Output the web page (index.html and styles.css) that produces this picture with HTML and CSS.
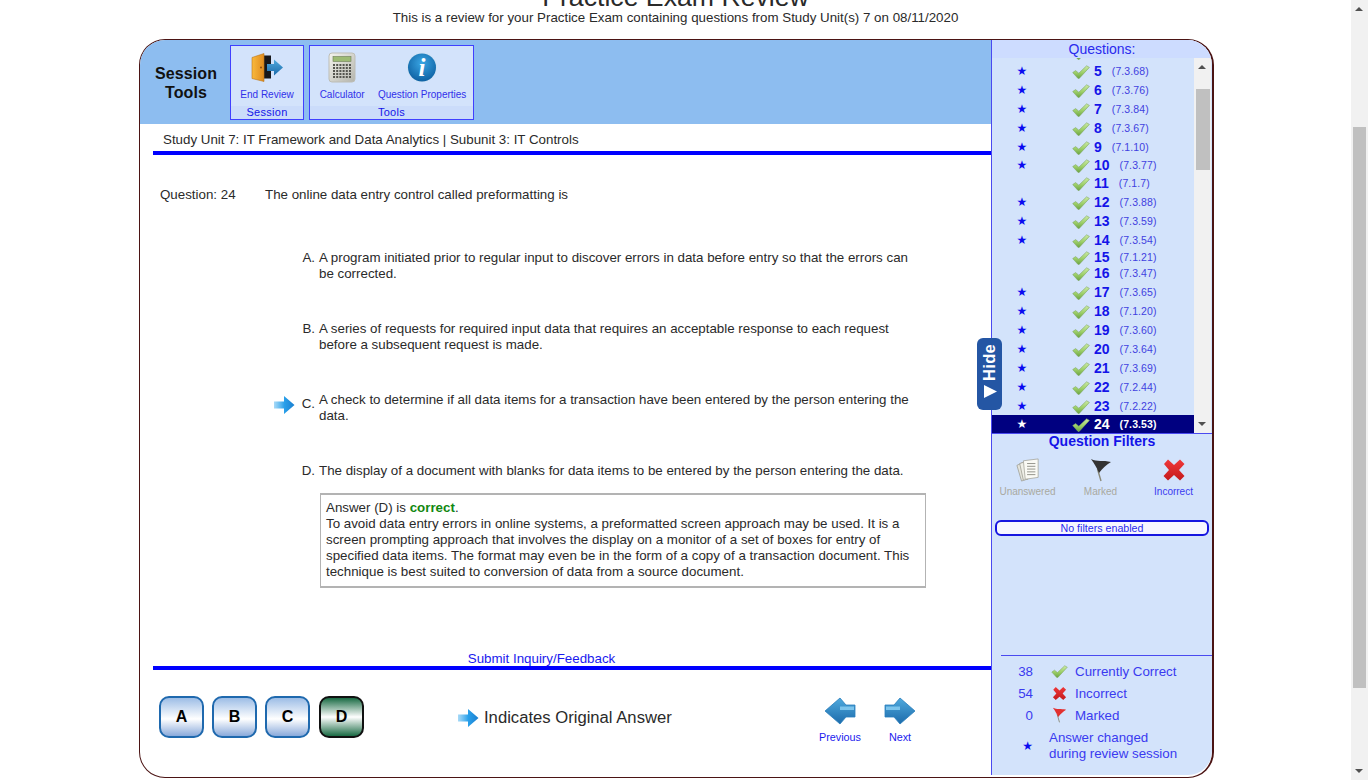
FILE: index.html
```html
<!DOCTYPE html>
<html lang="en">
<head>
    <meta charset="UTF-8">
    <title>Practice Exam Review</title>
    <link rel="stylesheet" href="styles.css">
</head>
<body>

<!-- icon sheet -->
<svg class="sprites" width="0" height="0">
    <defs>
        <linearGradient id="gCheck" x1="0" y1="0" x2="0" y2="1">
            <stop offset="0" stop-color="#cdeaa6"/><stop offset="0.55" stop-color="#9ccf68"/><stop offset="1" stop-color="#6ca443"/>
        </linearGradient>
        <linearGradient id="gArrow" x1="0" y1="0" x2="1" y2="0">
            <stop offset="0" stop-color="#6cc0f2" stop-opacity="0.6"/><stop offset="0.5" stop-color="#29a0ea"/><stop offset="1" stop-color="#1a7fd0"/>
        </linearGradient>
        <linearGradient id="gNav" x1="0" y1="0" x2="0" y2="1">
            <stop offset="0" stop-color="#4fa9dd"/><stop offset="1" stop-color="#1c6bab"/>
        </linearGradient>
        <linearGradient id="gDoor" x1="0" y1="0" x2="1" y2="0">
            <stop offset="0" stop-color="#f9b93c"/><stop offset="1" stop-color="#e08b1e"/>
        </linearGradient>
        <linearGradient id="gCalc" x1="0" y1="0" x2="1" y2="1">
            <stop offset="0" stop-color="#f4f4ee"/><stop offset="1" stop-color="#b4b4ac"/>
        </linearGradient>
        <radialGradient id="gInfo" cx="0.5" cy="0.35" r="0.7">
            <stop offset="0" stop-color="#3aa6e4"/><stop offset="1" stop-color="#0b5c9e"/>
        </radialGradient>
        <linearGradient id="gCross" x1="0" y1="0" x2="0" y2="1">
            <stop offset="0" stop-color="#f0383a"/><stop offset="1" stop-color="#c41a1c"/>
        </linearGradient>

        <symbol id="iCheck" viewBox="0 0 18 14">
            <path d="M0.7 7.6 L3.6 5.6 L6.8 8.2 L14.6 0.8 L17.4 2.4 L7.2 13.4 L6 13.4 Z" fill="url(#gCheck)" stroke="#7fa866" stroke-width="0.6"/>
        </symbol>
        <symbol id="iCross" viewBox="0 0 24 24">
            <path d="M2 6 L6 1.5 L12 7 L18 1.5 L22.5 6 L17 12 L22.5 18 L18 22.5 L12 17 L6 22.5 L1.5 18 L7 12 Z" fill="url(#gCross)"/>
        </symbol>
        <symbol id="iFlag" viewBox="0 0 22 24">
            <path d="M7.5 11 L11 23" stroke="#8a8a7a" stroke-width="1.4" fill="none"/>
            <path d="M1 1 C7 4 13 2 21 4 C16 7 13 10 9 15 C7 10 4 5 1 1 Z" fill="currentColor"/>
        </symbol>
        <symbol id="iArrowRight" viewBox="0 0 22 20">
            <path d="M1 6.5 H11 V1 L21.5 10 L11 19 V13.5 H1 Z" fill="url(#gArrow)"/>
        </symbol>
        <symbol id="iNext" viewBox="0 0 32 28">
            <path d="M1 8 H10 L16 1 L31 14 L16 27 L10 20 H1 Z" fill="url(#gNav)" stroke="#2a7fbd" stroke-width="0.8" stroke-linejoin="round"/>
            <path d="M2 9.5 H16 V13 H2 Z" fill="#7cc4ec"/>
        </symbol>
        <symbol id="iPrev" viewBox="0 0 32 28">
            <path d="M31 8 H22 L16 1 L1 14 L16 27 L22 20 H31 Z" fill="url(#gNav)" stroke="#2a7fbd" stroke-width="0.8" stroke-linejoin="round"/>
            <path d="M30 9.5 H16 V13 H30 Z" fill="#7cc4ec"/>
        </symbol>
    </defs>
</svg>

<div class="page">
    <div class="viewport">
        <header class="head">
            <h1 class="title">Practice Exam Review</h1>
            <p class="subtitle">This is a review for your Practice Exam containing questions from Study Unit(s) 7 on 08/11/2020</p>
        </header>

        <div class="frame">
            <main class="left">
                <div class="topbar">
                    <div class="brand">Session<br>Tools</div>
                    <div class="toolgroup group-session">
                        <div class="tools">
                            <a class="tool tool-door">
                                <svg class="tool-icon" width="34" height="30" viewBox="0 0 34 30">
                                    <path d="M8 3 H20 V26 H8 Z" fill="#17171a"/>
                                    <path d="M1 5 L13 1 V29 L1 26 Z" fill="url(#gDoor)" stroke="#b9761c" stroke-width="0.6"/>
                                    <circle cx="10" cy="15" r="1" fill="#8a4a10"/>
                                    <path d="M16 11.5 H23 V7 L32 15 L23 23 V18.5 H16 Z" fill="url(#gNav)"/>
                                </svg>
                                <span>End Review</span>
                            </a>
                        </div>
                        <div class="group-label">Session</div>
                    </div>
                    <div class="toolgroup group-tools">
                        <div class="tools">
                            <a class="tool tool-calc">
                                <svg class="tool-icon" width="28" height="31" viewBox="0 0 28 31">
                                    <rect x="1" y="1" width="26" height="29" rx="3" fill="url(#gCalc)" stroke="#bdbdb5"/>
                                    <rect x="5" y="4.5" width="18" height="5" fill="#9dbb74" stroke="#6d7d55" stroke-width="0.6"/>
                                    <path d="M5 13 H23 M5 16 H23 M5 19 H23 M5 22 H23 M5 25 H23" stroke="#55554f" stroke-width="2" stroke-dasharray="2 1.2"/>
                                </svg>
                                <span>Calculator</span>
                            </a>
                            <a class="tool tool-info">
                                <svg class="tool-icon" width="32" height="31" viewBox="0 0 32 31">
                                    <circle cx="16" cy="15.5" r="15" fill="#cfe2f4"/>
                                    <circle cx="16" cy="15.5" r="14" fill="url(#gInfo)"/>
                                    <text class="info-i" x="16" y="24" text-anchor="middle">i</text>
                                </svg>
                                <span>Question Properties</span>
                            </a>
                        </div>
                        <div class="group-label">Tools</div>
                    </div>
                </div>

                <div class="subject">Study Unit 7: IT Framework and Data Analytics | Subunit 3: IT Controls</div>

                <section class="body">
                    <div class="question">
                        <div class="q-num">Question: 24</div>
                        <div class="q-text">The online data entry control called preformatting is</div>
                    </div>

                    <div class="answer">
                        <div class="slot"></div>
                        <div class="letter">A.</div>
                        <div class="a-text">A program initiated prior to regular input to discover errors in data before entry so that the errors can be corrected.</div>
                    </div>
                    <div class="answer">
                        <div class="slot"></div>
                        <div class="letter">B.</div>
                        <div class="a-text">A series of requests for required input data that requires an acceptable response to each request before a subsequent request is made.</div>
                    </div>
                    <div class="answer answer-original">
                        <div class="slot"><svg width="22" height="20"><use href="#iArrowRight"/></svg></div>
                        <div class="letter">C.</div>
                        <div class="a-text">A check to determine if all data items for a transaction have been entered by the person entering the data.</div>
                    </div>
                    <div class="answer answer-last">
                        <div class="slot"></div>
                        <div class="letter">D.</div>
                        <div class="a-text">The display of a document with blanks for data items to be entered by the person entering the data.</div>
                    </div>

                    <div class="explain">
                        Answer (D) is <b class="correct">correct</b>.<br>
                        To avoid data entry errors in online systems, a preformatted screen approach may be used. It is a screen prompting approach that involves the display on a monitor of a set of boxes for entry of specified data items. The format may even be in the form of a copy of a transaction document. This technique is best suited to conversion of data from a source document.
                    </div>
                </section>

                <div class="inquiry"><a>Submit Inquiry/Feedback</a></div>

                <footer class="foot">
                    <div class="choices">
                        <button class="choice">A</button>
                        <button class="choice">B</button>
                        <button class="choice">C</button>
                        <button class="choice choice-right">D</button>
                    </div>
                    <div class="original">
                        <svg width="22" height="20"><use href="#iArrowRight"/></svg>
                        <span>Indicates Original Answer</span>
                    </div>
                    <a class="nav nav-prev"><svg width="34" height="28"><use href="#iPrev"/></svg><span>Previous</span></a>
                    <a class="nav nav-next"><svg width="32" height="28"><use href="#iNext"/></svg><span>Next</span></a>
                </footer>
            </main>

            <aside class="panel">
                <div class="panel-title">Questions:</div>
                <div class="listwrap">
                    <div class="list">
                        <div class="rows">
                            <!-- row above is scrolled away, only its check shows -->
                            <div class="row h19"><span class="star"></span><svg class="chk" width="18" height="14"><use href="#iCheck"/></svg></div>
                            <div class="row h19"><span class="star">★</span><svg class="chk" width="18" height="14"><use href="#iCheck"/></svg><b class="num">5</b><span class="code">(7.3.68)</span></div>
                            <div class="row h19"><span class="star">★</span><svg class="chk" width="18" height="14"><use href="#iCheck"/></svg><b class="num">6</b><span class="code">(7.3.76)</span></div>
                            <div class="row h19"><span class="star">★</span><svg class="chk" width="18" height="14"><use href="#iCheck"/></svg><b class="num">7</b><span class="code">(7.3.84)</span></div>
                            <div class="row h19"><span class="star">★</span><svg class="chk" width="18" height="14"><use href="#iCheck"/></svg><b class="num">8</b><span class="code">(7.3.67)</span></div>
                            <div class="row h19"><span class="star">★</span><svg class="chk" width="18" height="14"><use href="#iCheck"/></svg><b class="num">9</b><span class="code">(7.1.10)</span></div>
                            <div class="row h18"><span class="star">★</span><svg class="chk" width="18" height="14"><use href="#iCheck"/></svg><b class="num">10</b><span class="code">(7.3.77)</span></div>
                            <div class="row h18"><span class="star"></span><svg class="chk" width="18" height="14"><use href="#iCheck"/></svg><b class="num">11</b><span class="code">(7.1.7)</span></div>
                            <div class="row h19"><span class="star">★</span><svg class="chk" width="18" height="14"><use href="#iCheck"/></svg><b class="num">12</b><span class="code">(7.3.88)</span></div>
                            <div class="row h19"><span class="star">★</span><svg class="chk" width="18" height="14"><use href="#iCheck"/></svg><b class="num">13</b><span class="code">(7.3.59)</span></div>
                            <div class="row h19"><span class="star">★</span><svg class="chk" width="18" height="14"><use href="#iCheck"/></svg><b class="num">14</b><span class="code">(7.3.54)</span></div>
                            <div class="row h15"><span class="star"></span><svg class="chk" width="18" height="14"><use href="#iCheck"/></svg><b class="num">15</b><span class="code">(7.1.21)</span></div>
                            <div class="row h18"><span class="star"></span><svg class="chk" width="18" height="14"><use href="#iCheck"/></svg><b class="num">16</b><span class="code">(7.3.47)</span></div>
                            <div class="row h19"><span class="star">★</span><svg class="chk" width="18" height="14"><use href="#iCheck"/></svg><b class="num">17</b><span class="code">(7.3.65)</span></div>
                            <div class="row h19"><span class="star">★</span><svg class="chk" width="18" height="14"><use href="#iCheck"/></svg><b class="num">18</b><span class="code">(7.1.20)</span></div>
                            <div class="row h19"><span class="star">★</span><svg class="chk" width="18" height="14"><use href="#iCheck"/></svg><b class="num">19</b><span class="code">(7.3.60)</span></div>
                            <div class="row h19"><span class="star">★</span><svg class="chk" width="18" height="14"><use href="#iCheck"/></svg><b class="num">20</b><span class="code">(7.3.64)</span></div>
                            <div class="row h19"><span class="star">★</span><svg class="chk" width="18" height="14"><use href="#iCheck"/></svg><b class="num">21</b><span class="code">(7.3.69)</span></div>
                            <div class="row h19"><span class="star">★</span><svg class="chk" width="18" height="14"><use href="#iCheck"/></svg><b class="num">22</b><span class="code">(7.2.44)</span></div>
                            <div class="row h19"><span class="star">★</span><svg class="chk" width="18" height="14"><use href="#iCheck"/></svg><b class="num">23</b><span class="code">(7.2.22)</span></div>
                            <div class="row h18 row-current"><span class="star">★</span><svg class="chk" width="18" height="14"><use href="#iCheck"/></svg><b class="num">24</b><span class="code">(7.3.53)</span></div>
                        </div>
                    </div>
                    <div class="scroll scroll-list">
                        <span class="tri tri-up"></span>
                        <span class="thumb"></span>
                        <span class="tri tri-down"></span>
                    </div>
                </div>

                <div class="filters">
                    <div class="filters-title">Question Filters</div>
                    <div class="filter-items">
                        <div class="filter filter-off">
                            <svg width="26" height="26" viewBox="0 0 26 26">
                                <path d="M1 8 L7 5 L11 23 L6 25 Z" fill="#e4e4dc" stroke="#99998f" stroke-width="0.8"/>
                                <path d="M4 6 L10 4 L13 23 L8 24 Z" fill="#efefe8" stroke="#99998f" stroke-width="0.8"/>
                                <path d="M8 3 L24 1 L24 21 L10 23 Z" fill="#fafaf5" stroke="#a0a096" stroke-width="0.8"/>
                                <path d="M12 6 H21 M12 9 H21 M12 12 H21 M12 15 H21 M12 18 H21" stroke="#8e8e86" stroke-width="1"/>
                            </svg>
                            <span>Unanswered</span>
                        </div>
                        <div class="filter filter-off">
                            <svg class="flag-black" width="22" height="24"><use href="#iFlag"/></svg>
                            <span>Marked</span>
                        </div>
                        <div class="filter">
                            <svg width="24" height="24"><use href="#iCross"/></svg>
                            <span>Incorrect</span>
                        </div>
                    </div>
                    <div class="filter-status">No filters enabled</div>
                </div>

                <div class="legend">
                    <div class="legend-row"><span class="count">38</span><svg class="legend-icon" width="17" height="13"><use href="#iCheck"/></svg><span>Currently Correct</span></div>
                    <div class="legend-row"><span class="count">54</span><svg class="legend-icon" width="15" height="15"><use href="#iCross"/></svg><span>Incorrect</span></div>
                    <div class="legend-row"><span class="count">0</span><svg class="legend-icon flag-red" width="15" height="16"><use href="#iFlag"/></svg><span>Marked</span></div>
                    <div class="legend-change"><span class="star">★</span><span>Answer changed<br>during review session</span></div>
                </div>
            </aside>

            <div class="hide-tab">
                <span class="hide-text">Hide</span>
                <svg width="16" height="15" viewBox="0 0 16 15"><path d="M2 1 L15 7.5 L2 14 Z" fill="#fff"/></svg>
            </div>
        </div>
    </div>

    <div class="scroll scroll-page">
        <span class="tri tri-up"></span>
        <span class="thumb"></span>
        <span class="tri tri-down"></span>
    </div>
</div>

</body>
</html>
```

FILE: styles.css
```css
html, body {
    margin: 0;
    padding: 0;
    height: 780px;
    overflow: hidden;
    background: #fff;
    font-family: "Liberation Sans", Arial, sans-serif;
    color: #2a2a2a;
}

.sprites {
    position: absolute;
}

.page {
    display: flex;
    height: 780px;
}

.viewport {
    flex: 1;
    overflow: hidden;
}

/* page heading, scrolled partly out of view */
.head {
    display: flow-root;
    height: 39px;
    text-align: center;
}

.title {
    margin: -17px 0 0;
    font-size: 26.67px;
    line-height: 28px;
    font-weight: normal;
}

.subtitle {
    margin: -1px 0 0;
    font-size: 13.33px;
    line-height: 16px;
}

.frame {
    position: relative;
    display: grid;
    grid-template-columns: 1fr 221px;
    width: 1072px;
    height: 737px;
    margin-left: 139px;
    border: 1px solid #4b1414;
    border-right-width: 2px;
    border-radius: 26px;
    overflow: hidden;
    box-sizing: content-box;
}

.left {
    display: flex;
    flex-direction: column;
    min-width: 0;
}

/* top toolbar */
.topbar {
    display: flex;
    height: 84px;
    padding: 5px 0 4px;
    box-sizing: border-box;
    background: #8dbdf0;
}

.brand {
    width: 88px;
    padding: 19px 0 0 2px;
    font-size: 16px;
    line-height: 19px;
    font-weight: bold;
    letter-spacing: 0.1px;
    text-align: center;
    color: #111;
}

.toolgroup {
    display: flex;
    flex-direction: column;
    box-sizing: border-box;
    margin-right: 5px;
    border: 1px solid #4040ff;
    background: #d3e3fb;
}

.group-session {
    width: 74px;
}

.group-tools {
    width: 165px;
}

.group-tools .tools {
    padding-left: 3px;
}

.tools {
    display: flex;
    flex: 1;
    justify-content: space-around;
}

.tool {
    display: flex;
    flex-direction: column;
    align-items: center;
    padding-top: 6px;
    font-size: 10px;
    color: #3030ea;
    white-space: nowrap;
}

.tool-icon {
    height: 31px;
    margin-bottom: 6px;
}

.tool-door .tool-icon {
    margin-left: 3px;
}

.info-i {
    font-family: "Liberation Serif", serif;
    font-size: 25px;
    font-weight: bold;
    font-style: italic;
    fill: #fff;
}

.group-label {
    height: 13px;
    font-size: 11px;
    line-height: 13px;
    text-align: center;
    letter-spacing: 0.3px;
    color: #1515e8;
    background: #cbdcfa;
}

/* subject line */
.subject {
    height: 27px;
    margin-left: 13px;
    padding-left: 10px;
    border-bottom: 4px solid #0000ff;
    font-size: 13.33px;
    line-height: 32px;
}

/* question and answers */
.body {
    flex: 1;
    font-size: 13.33px;
    line-height: 16px;
}

.question {
    display: flex;
    padding: 32px 0 0 20px;
    margin-bottom: 47px;
}

.q-num {
    width: 105px;
}

.answer {
    display: flex;
    height: 32px;
    margin-bottom: 39px;
}

.answer-last {
    height: 16px;
    margin-bottom: 14px;
}

.slot {
    width: 133px;
    margin-right: 26px;
    display: flex;
    justify-content: flex-end;
    padding-top: 3px;
}

.slot svg {
    margin-right: -22px;
}

.letter {
    width: 16px;
    margin-right: 4px;
    text-align: right;
}

.answer-original .letter {
    padding-top: 4px;
}

.a-text {
    width: 594px;
}

.explain {
    box-sizing: border-box;
    width: 606px;
    height: 95px;
    margin-left: 180px;
    padding: 5px 12px 0 5px;
    border: 2px solid #b3b3b3;
    border-left-width: 1px;
    border-right-width: 1px;
}

.correct {
    color: #118811;
}

.inquiry {
    height: 15px;
    margin: 0 61px 0 13px;
    font-size: 13.33px;
    line-height: 15px;
    text-align: center;
    color: #1a1aee;
}

.foot {
    display: flex;
    align-items: flex-start;
    height: 111px;
    margin-left: 13px;
    padding-left: 6px;
    border-top: 4px solid #0000ff;
    box-sizing: border-box;
}

.choices {
    display: flex;
    gap: 8px;
    margin-top: 26px;
}

.choice {
    width: 45px;
    height: 42px;
    padding: 0;
    border: 2px solid #1f69ae;
    border-radius: 10px;
    background: linear-gradient(#9dbde6, #fff 55%, #8aaadb);
    font-family: "Liberation Sans", Arial, sans-serif;
    font-size: 16px;
    font-weight: bold;
    color: #000;
}

.choice-right {
    margin-left: 1px;
    border-color: #111;
    background: linear-gradient(#1a6b44, #fff 50%, #1a6b44);
}

.original {
    display: flex;
    align-items: center;
    gap: 5px;
    margin: 38px 0 0 93px;
    width: 361px;
    font-size: 16.65px;
    line-height: 20px;
}

.nav {
    display: flex;
    flex-direction: column;
    align-items: center;
    margin-top: 27px;
    font-size: 10.8px;
    color: #1a1aee;
}

.nav svg {
    margin-bottom: 6px;
}

.nav-prev {
    width: 44px;
}

.nav-next {
    width: 32px;
    margin-left: 22px;
}

/* right panel */
.panel {
    display: flex;
    flex-direction: column;
    margin-bottom: 2px;
    border-left: 1px solid #4a4af0;
    border-radius: 0 0 24px 0;
    background: #d3e3fb;
    color: #2a2aee;
    min-width: 0;
}

.panel-title {
    height: 18px;
    font-size: 14px;
    line-height: 19px;
    text-align: center;
    background: #cddcff;
}

.listwrap {
    display: flex;
    height: 375px;
    padding-right: 1px;
    border-bottom: 1px solid #4a4af0;
}

.list {
    flex: 1;
    overflow: hidden;
}

.rows {
    margin-top: -16px;
}

.row {
    display: flex;
    align-items: center;
    color: #1414e8;
}

.h15 { height: 15px; }
.h18 { height: 18px; }
.h19 { height: 19px; }

.star {
    font-family: "DejaVu Sans", sans-serif;
    font-size: 12px;
    color: #0a0af0;
}

.row .star {
    width: 60px;
    text-align: center;
}

.chk {
    margin: 2px 4px 0 20px;
}

.num {
    font-size: 14px;
    margin-right: 10px;
}

.code {
    font-size: 10.5px;
    letter-spacing: 0.1px;
    color: #4141e0;
}

.row-current {
    background: #000080;
    color: #fff;
}

.row-current .star,
.row-current .code {
    color: #fff;
}

.row-current .code {
    font-weight: bold;
}

/* fake scrollbars */
.scroll {
    position: relative;
    width: 17px;
    flex: none;
    background: #f1f1f1;
}

.thumb {
    position: absolute;
    left: 2px;
    width: 14px;
    background: #c0c0c0;
}

.scroll-list .thumb {
    top: 31px;
    height: 81px;
}

.scroll-page .thumb {
    top: 127px;
    height: 561px;
    width: 13px;
}

.tri {
    position: absolute;
    left: 4px;
    border-left: 4px solid transparent;
    border-right: 4px solid transparent;
}

.tri-up {
    top: 7px;
    border-bottom: 4px solid #505050;
}

.tri-down {
    bottom: 7px;
    border-top: 4px solid #505050;
}

/* filters */
.filters {
    flex: 1;
}

.filters-title {
    font-size: 14px;
    line-height: 14px;
    font-weight: bold;
    text-align: center;
    color: #1414e8;
}

.filter-items {
    display: flex;
    margin: 10px 0 0 -1px;
}

.filter {
    display: flex;
    flex-direction: column;
    align-items: center;
    width: 73px;
    font-size: 10px;
    color: #3a3af0;
}

.filter svg {
    height: 24px;
    margin-bottom: 4px;
}

.filter-off {
    color: #a9a9a0;
}

.flag-black {
    color: #333;
}

.flag-red {
    color: #e23030;
}

.filter-status {
    box-sizing: border-box;
    height: 16px;
    margin: 23px 3px 0 3px;
    border: 2px solid #1515e0;
    border-radius: 6px;
    background: #f6f6ff;
    font-size: 10.67px;
    line-height: 12px;
    text-align: center;
    color: #2a2aee;
}

.legend {
    height: 120px;
    margin-left: 9px;
    padding-top: 4px;
    border-top: 1px solid #4a4af0;
    box-sizing: border-box;
    font-size: 13.33px;
    color: #3a3af0;
}

.legend-row {
    display: flex;
    align-items: center;
    height: 22px;
}

.count {
    width: 32px;
    text-align: right;
}

.legend-icon {
    margin: 0 7px 0 18px;
    width: 17px;
}

.legend-change {
    display: flex;
    align-items: center;
    height: 34px;
    margin-top: 3px;
    line-height: 16px;
}

.legend-change .star {
    width: 32px;
    margin-right: 16px;
    text-align: right;
}

/* Hide tab over the panel edge */
.hide-tab {
    position: absolute;
    left: 837px;
    top: 298px;
    display: flex;
    flex-direction: column;
    align-items: center;
    gap: 3px;
    box-sizing: border-box;
    width: 25px;
    height: 72px;
    padding: 6px 0 0;
    border-radius: 6px;
    background: #2456a4;
}

.hide-text {
    writing-mode: vertical-rl;
    transform: rotate(180deg);
    font-size: 16.5px;
    line-height: 25px;
    font-weight: bold;
    letter-spacing: 0.3px;
    color: #fff;
}
```
